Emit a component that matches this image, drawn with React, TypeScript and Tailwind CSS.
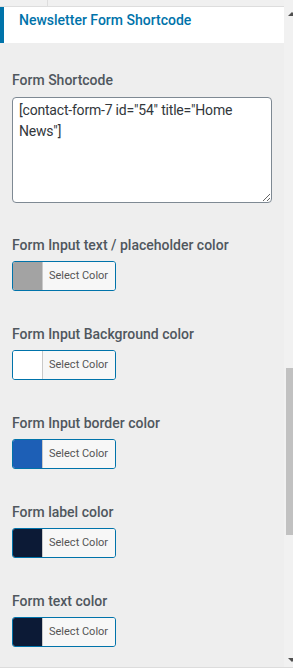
const font = { fontFamily: 'Roboto, "Liberation Sans", sans-serif' };

const swatches = [
  { label: 'Form Input text / placeholder color', color: 'bg-[#a3a3a3]' },
  { label: 'Form Input Background color', color: 'bg-white' },
  { label: 'Form Input border color', color: 'bg-[#1d5fb6]' },
  { label: 'Form label color', color: 'bg-[#0c1a36]' },
  { label: 'Form text color', color: 'bg-[#0c1a36]' },
];

function ColorButton({ color }: { color: string }) {
  return (
    <div className="mt-[6px] flex h-[30px] w-[104px] overflow-hidden rounded-[3px] border border-[#0073aa]">
      <div className={`w-[30px] border-r border-[#c9c9c9] ${color}`} />
      <div className="flex flex-1 items-center bg-[#f7f7f7] pl-[6px] text-[11px] text-[#555]">
        Select Color
      </div>
    </div>
  );
}

export default function App() {
  return (
    <div
      className="flex h-[668px] w-[293px] overflow-hidden border-b border-[#dcdcdc] bg-[#eeeeee]"
      style={font}
    >
      <div className="flex w-[284px] flex-col">
        <div className="flex h-[7px] border-b border-[#dddddd] bg-[#f0f0f0]">
          <div className="w-[48px] border-r border-[#dddddd]" />
        </div>

        <div className="h-[36px] border-l-4 border-[#0073aa] bg-white pl-[15px] pt-[3px]">
          <div className="text-[14px] font-medium leading-[20px] text-[#0073aa]">
            Newsletter Form Shortcode
          </div>
        </div>

        <div className="px-[12px] pt-[27px]">
          <div className="text-[14px] font-medium leading-[20px] text-[#50575e]">
            Form Shortcode
          </div>
          <textarea
            className="mt-[7px] block h-[106px] w-[260px] rounded-[4px] border border-[#7e8993] bg-white px-[6px] py-[2px] text-[14px] leading-[21px] tracking-[-0.2px] text-[#32373c] outline-none"
            style={font}
            defaultValue={'[contact-form-7 id="54" title="Home News"]'}
          />

          <div className="mt-[32px] flex flex-col gap-[33px]">
            {swatches.map((s) => (
              <div key={s.label}>
                <div className="text-[14px] font-medium leading-[20px] text-[#50575e]">
                  {s.label}
                </div>
                <ColorButton color={s.color} />
              </div>
            ))}
          </div>
        </div>
      </div>

      <div className="flex w-[9px] flex-col bg-[#f1f1f1]">
        <div className="ml-[4px] mt-[12px] h-0 w-0 border-x-[4px] border-b-[4px] border-x-transparent border-b-[#505050]" />
        <div className="ml-[2px] mt-[352px] h-[167px] w-[7px] bg-[#c1c1c1]" />
        <div className="flex-1" />
        <div className="mb-[5px] ml-[4px] h-0 w-0 border-x-[4px] border-t-[4px] border-x-transparent border-t-[#505050]" />
      </div>
    </div>
  );
}
